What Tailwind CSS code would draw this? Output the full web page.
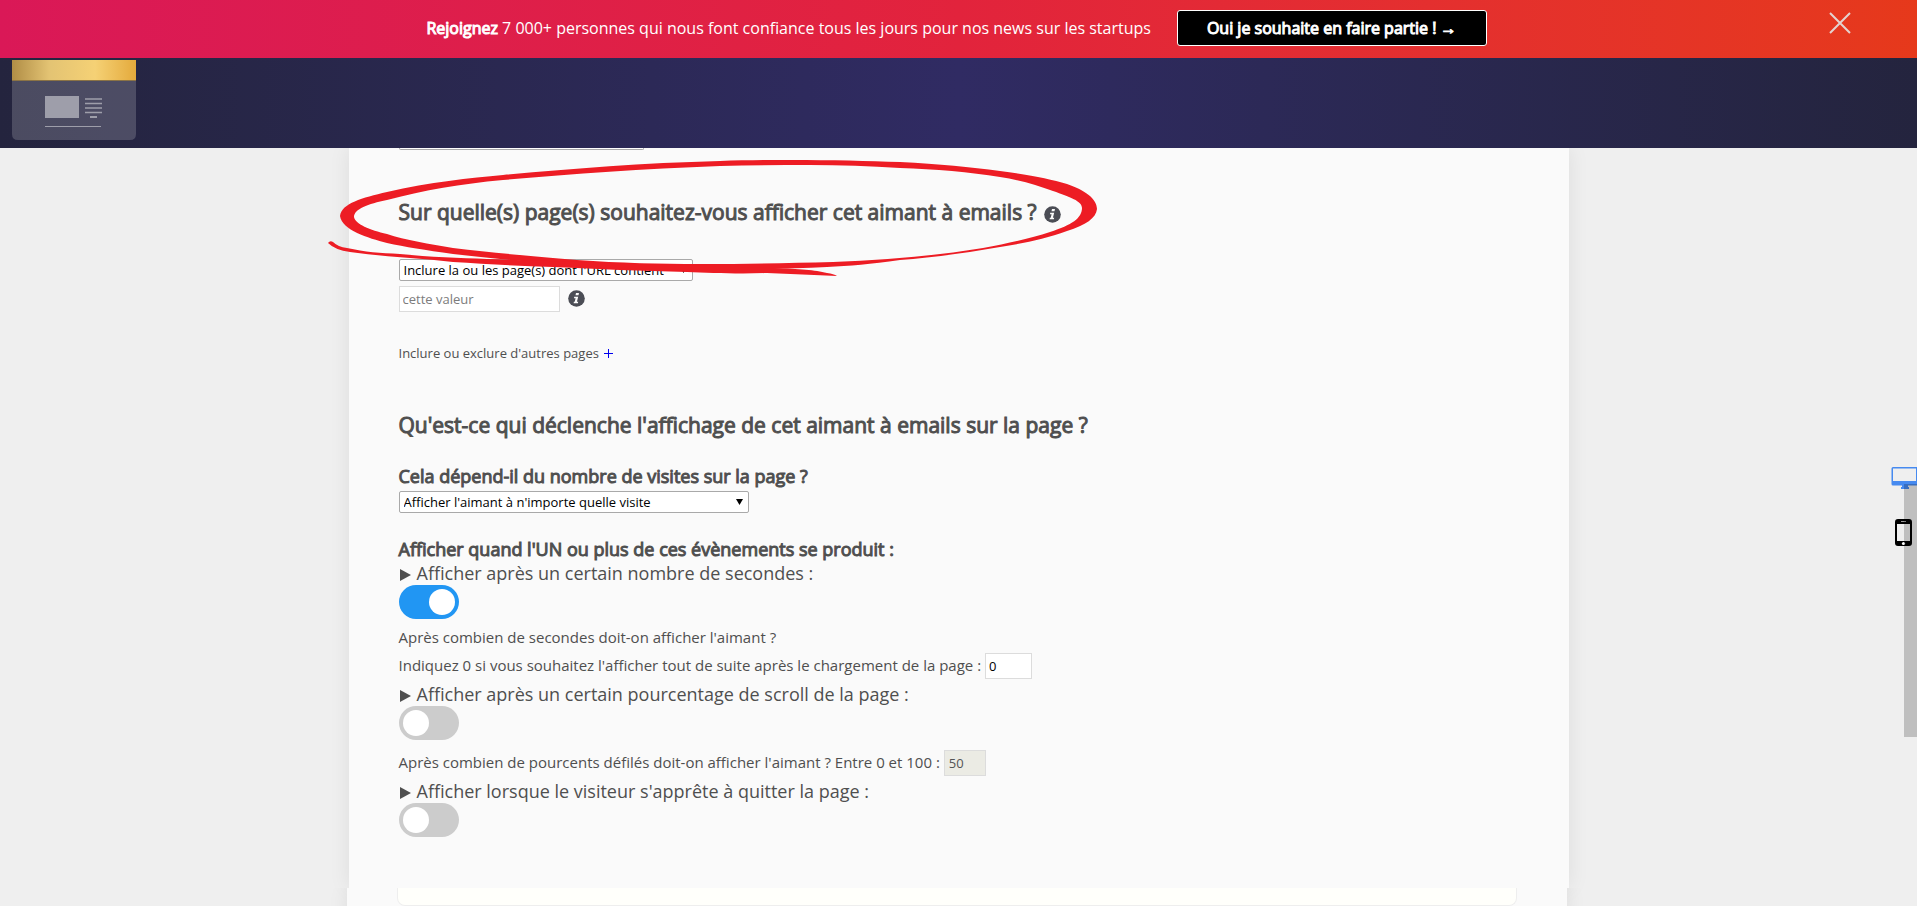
<!DOCTYPE html>
<html lang="fr">
<head>
<meta charset="utf-8">
<meta name="viewport" content="width=device-width, initial-scale=1">
<title>Aimant à emails</title>
<script src="https://cdn.jsdelivr.net/npm/@tailwindcss/browser@4"></script>
</head>
<body class="flex h-screen flex-col overflow-hidden bg-[#efefef] font-['Open_Sans',sans-serif] text-[#4f4f4f]">

<!-- Promotional banner -->
<div class="relative flex h-[58px] shrink-0 items-center justify-center gap-[26px] bg-linear-to-r from-[#da1857] via-[#e2233c] to-[#e6391b] pr-1 pb-[2px] text-base text-white">
  <p><span class="[-webkit-text-stroke:1px]">Rejoignez</span> 7 000+ personnes qui nous font confiance tous les jours pour nos news sur les startups</p>
  <button class="h-9 rounded-[3px] border border-white bg-black px-[29px] text-white [-webkit-text-stroke:1px]">Oui je souhaite en faire partie ! →</button>
  <button aria-label="Fermer" class="absolute top-3 right-[66px]">
    <svg class="block" width="22" height="22" viewBox="0 0 22 22" stroke="#e3d3d0" stroke-width="2" fill="none"><path d="M1 1L21 21M21 1L1 21"/></svg>
  </button>
</div>

<!-- Navigation header -->
<header class="h-[90px] shrink-0 bg-linear-to-r from-[#24243e] via-[#302b63] to-[#24243e] px-3 pt-[2px]">
  <a href="#" aria-label="Bandeau" class="block w-[124px]">
    <svg class="block" width="124" height="80" viewBox="0 0 124 80">
      <defs><linearGradient id="gold"><stop offset="0" stop-color="#b08d46"/><stop offset=".3" stop-color="#e3c373"/><stop offset=".67" stop-color="#f5d175"/><stop offset="1" stop-color="#e4aa3c"/></linearGradient></defs>
      <path d="M0 20H124V74Q124 80 118 80H6Q0 80 0 74Z" fill="#fff" fill-opacity=".18"/>
      <path d="M0 0H124V20H0Z" fill="url(#gold)"/><path d="M0 20H124V21H0Z" fill="#8b7345"/>
      <path d="M33 36H67V58H33Z" fill="#9e9eaa"/>
      <path d="M73 39H90M73 43.500H90M73 48H90M73 52.500H90" stroke="#9e9eaa" stroke-width="1.500"/><path d="M78 57H85" stroke="#9e9eaa" stroke-width="2"/>
      <path d="M33 66.500H89" stroke="#9e9eaa"/>
    </svg>
  </a>
</header>

<main class="relative flex-1 overflow-hidden">
  <form class="relative mx-auto max-w-[1220px] bg-[#fafafa] px-[50px] pb-[51px] shadow-[0_0_20px_rgba(0,0,0,0.08)]">
    <div class="h-[2px] w-[245px] rounded-b-xs border border-t-0 border-[#a9a9a9] bg-white"></div>

    <h2 class="mt-[47px] flex items-center gap-[7px] text-[21px] leading-[30px] [-webkit-text-stroke:1px]">
      Sur quelle(s) page(s) souhaitez-vous afficher cet aimant à emails ?
      <svg class="mt-1" width="17" height="17" viewBox="0 0 17 17" stroke="none"><circle cx="8.500" cy="8.500" r="8.300" fill="#4b4d55"/><path d="M8 3h3l-.5 2.300h-3zM6.200 6.700h4l-1.300 5h1.300l-.3 1.600H5.600l.3-1.600h.8l.9-3.400H6z" fill="#fafafa"/></svg>
    </h2>
    <div class="relative mt-8 w-[294px]">
      <select aria-label="Règle de page" class="block h-[22px] w-full appearance-none rounded-xs border border-[#a9a9a9] bg-white pl-1 text-[13px] leading-5 text-black"><option>Inclure la ou les page(s) dont l'URL contient</option></select>
      <svg class="pointer-events-none absolute top-2 right-[6px]" width="7" height="6" viewBox="0 0 7 6"><path d="M0 0H7L3.500 6Z" fill="#000"/></svg>
    </div>
    <div class="mt-[5px] flex items-center gap-2">
      <input type="text" aria-label="Valeur" placeholder="cette valeur" class="h-[26px] w-[161px] border border-[#dcdcdc] bg-white px-[3px] text-[13px] placeholder:text-[#7c7c7c]">
      <svg class="mb-[2px]" width="17" height="17" viewBox="0 0 17 17"><circle cx="8.500" cy="8.500" r="8.300" fill="#4b4d55"/><path d="M8 3h3l-.5 2.300h-3zM6.200 6.700h4l-1.300 5h1.300l-.3 1.600H5.600l.3-1.600h.8l.9-3.400H6z" fill="#fafafa"/></svg>
    </div>
    <p class="mt-8 flex items-center gap-[5px] text-[13px] leading-[18px]">Inclure ou exclure d'autres pages <a href="#" aria-label="Ajouter une page" class="text-[#0000ee]"><svg class="block" width="9" height="9" viewBox="0 0 9 9" stroke="currentColor"><path d="M4.500 0V9M0 4.500H9"/></svg></a></p>

    <h2 class="mt-12 text-[21px] leading-[30px] [-webkit-text-stroke:1px]">Qu'est-ce qui déclenche l'affichage de cet aimant à emails sur la page ?</h2>
    <h3 class="mt-6 text-lg leading-6 [-webkit-text-stroke:1px]"><label for="visits">Cela dépend-il du nombre de visites sur la page ?</label></h3>
    <div class="relative mt-[3px] w-[350px]">
      <select id="visits" class="block h-[22px] w-full appearance-none rounded-xs border border-[#a9a9a9] bg-white pl-1 text-[13px] leading-5 text-black"><option>Afficher l'aimant à n'importe quelle visite</option></select>
      <svg class="pointer-events-none absolute top-2 right-[6px]" width="7" height="6" viewBox="0 0 7 6"><path d="M0 0H7L3.500 6Z" fill="#000"/></svg>
    </div>

    <h3 class="mt-6 text-lg leading-6 [-webkit-text-stroke:1px]">Afficher quand l'UN ou plus de ces évènements se produit :</h3>
    <label for="t1" class="flex items-center gap-[6px] text-lg leading-6"><svg class="mt-[3px]" width="12" height="12" viewBox="0 0 12 12"><path d="M1 0L12 6L1 12Z" fill="currentColor"/></svg>Afficher après un certain nombre de secondes :</label>
    <input id="t1" type="checkbox" checked class="flex h-[34px] w-[60px] appearance-none items-center rounded-full bg-[#ccc] px-1 before:size-[26px] before:rounded-full before:bg-white checked:justify-end checked:bg-[#2196f3]">
    <p class="mt-2 text-[15px] leading-5">Après combien de secondes doit-on afficher l'aimant ?</p>
    <div class="mt-[6px] flex items-center gap-1 text-[15px] leading-5">
      <label for="secs" class="pb-[2px]">Indiquez 0 si vous souhaitez l'afficher tout de suite après le chargement de la page :</label>
      <input id="secs" type="text" value="0" class="h-[26px] w-[47px] border border-[#dcdcdc] bg-white px-[3px] text-[13px] text-black">
    </div>
    <label for="t2" class="mt-[3px] flex items-center gap-[6px] text-lg leading-6"><svg class="mt-[3px]" width="12" height="12" viewBox="0 0 12 12"><path d="M1 0L12 6L1 12Z" fill="currentColor"/></svg>Afficher après un certain pourcentage de scroll de la page :</label>
    <input id="t2" type="checkbox" class="flex h-[34px] w-[60px] appearance-none items-center rounded-full bg-[#ccc] px-1 before:size-[26px] before:rounded-full before:bg-white checked:justify-end checked:bg-[#2196f3]">
    <div class="mt-[10px] flex items-center gap-1 text-[15px] leading-5">
      <label for="pct" class="pb-[2px]">Après combien de pourcents défilés doit-on afficher l'aimant ? Entre 0 et 100 :</label>
      <input id="pct" type="text" value="50" disabled class="h-[26px] w-[42px] border border-[#dcdcdc] bg-[#ebebe4] px-1 text-[13px] text-[#545454]">
    </div>
    <label for="t3" class="mt-[3px] flex items-center gap-[6px] text-lg leading-6"><svg class="mt-[3px]" width="12" height="12" viewBox="0 0 12 12"><path d="M1 0L12 6L1 12Z" fill="currentColor"/></svg>Afficher lorsque le visiteur s'apprête à quitter la page :</label>
    <input id="t3" type="checkbox" class="flex h-[34px] w-[60px] appearance-none items-center rounded-full bg-[#ccc] px-1 before:size-[26px] before:rounded-full before:bg-white checked:justify-end checked:bg-[#2196f3]">

    <!-- Hand-drawn red ring around the first question -->
    <svg class="pointer-events-none absolute top-0 -left-[29px]" width="800" height="140" viewBox="320 148 800 140" fill="#ed1c24">
      <path fill-rule="evenodd" d="M340 216C342 203 362 198 387 192C430 182 470 178 503 175C570 169 640 163 720 161C780 159 850 160 900 162C940 164 970 167 1000 171C1030 175 1050 179 1067 184C1085 190 1097 199 1097 209C1096 218 1086 225 1067 231C1045 239 1025 243 1000 247C965 253 930 258 900 260C870 264 850 266 827 267C740 271 640 271 577 266C530 262 490 258 453 254C425 250 405 247 387 243C368 238 342 230 340 216ZM354 217C355 224 370 230 387 234C405 240 430 244 453 248C495 253 530 256 577 260C620 263 660 264 700 264C750 264 790 263 833 262C885 260 935 256 983 248C1010 243 1032 238 1050 232C1072 225 1082 218 1082 208C1082 201 1070 197 1053 191C1037 185 1020 180 1000 177C970 172 935 169 900 168C870 166 840 165 810 165C780 165 750 165 720 166C640 169 570 174 503 180C460 184 425 190 387 200C368 204 354 209 354 217Z"/>
      <path d="M328 243Q330 240 333 242Q338 247 347 248C365 252 380 253 400 254C430 257 460 258 487 259C580 262 680 265 773 268C800 269 815 270 827 273Q834 274 837 276C815 275 790 274 767 273C740 274 710 273 687 272C640 271 600 269 553 267C520 266 485 264 453 262C420 258 385 257 350 252Q335 250 328 243Z"/>
    </svg>
  </form>

  <div class="pr-1">
    <section class="mx-auto h-10 max-w-[1220px] bg-[#fafafa] px-[50px] shadow-[0_0_20px_rgba(0,0,0,0.08)] [clip-path:inset(0_-20px)]">
      <div class="h-[18px] rounded-b-lg border border-t-0 border-[#eeeeee] bg-[#fffffb]"></div>
    </section>
  </div>

  <!-- Device preview switch over the side tab -->
  <aside class="absolute top-[318px] right-0 h-[271px] w-[26px]">
    <button aria-label="Ordinateur" class="absolute top-0 left-0"><svg class="block" width="26" height="24" viewBox="0 0 26 24"><path fill-rule="evenodd" d="M2 1H26V19.500H17V21H18V23H10V21H11V19.500H2Q.5 19.500 .5 18V2.500Q.5 1 2 1ZM2 2.500V15H25V2.500Z" fill="#468af0"/></svg></button>
    <button aria-label="Mobile" class="absolute top-[53px] left-1"><svg class="block" width="17" height="27" viewBox="0 0 17 27"><path fill-rule="evenodd" d="M3 0H14Q17 0 17 3V24Q17 27 14 27H3Q0 27 0 24V3Q0 0 3 0ZM2 5V22H15V5Z"/><path d="M6 2.500H11" stroke="#999"/><circle cx="8.500" cy="24.500" r="1.600" fill="#fff"/></svg></button>
    <div class="pointer-events-none absolute right-0 bottom-0 h-[253px] w-[13px] bg-black/20"></div>
  </aside>
</main>
</body>
</html>
